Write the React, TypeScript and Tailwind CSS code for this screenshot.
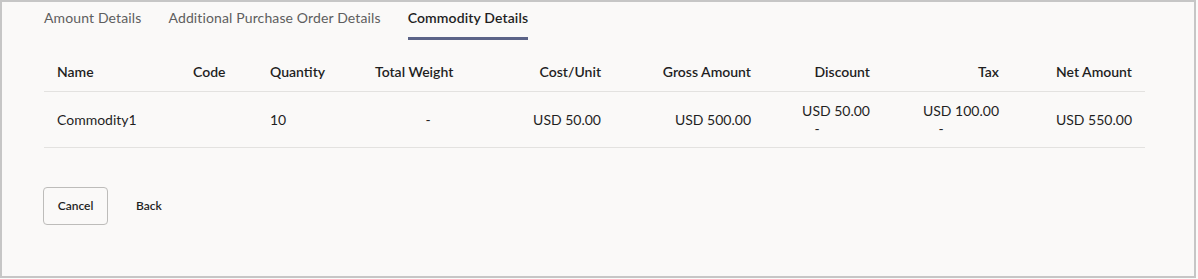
const columns = [
  { label: 'Name', align: 'left' },
  { label: 'Code', align: 'left' },
  { label: 'Quantity', align: 'left' },
  { label: 'Total Weight', align: 'left' },
  { label: 'Cost/Unit', align: 'right' },
  { label: 'Gross Amount', align: 'right' },
  { label: 'Discount', align: 'right' },
  { label: 'Tax', align: 'right' },
  { label: 'Net Amount', align: 'right' },
];

const tabs = ['Amount Details', 'Additional Purchase Order Details', 'Commodity Details'];

function Amount({ value }: { value: string }) {
  // amount with a second line for the rate
  return (
    <div className="flex flex-col items-end leading-[18px]">
      <span>{value}</span>
      <span className="w-full text-center">-</span>
    </div>
  );
}

export default function App() {
  return (
    <div className="w-[1198px] h-[279px] bg-[#fbfbfa]" style={{ fontFamily: 'Lato, "Noto Sans", sans-serif' }}>
      <div className="w-[1196px] h-[278px] border-2 border-[#c6c6c6] bg-[#faf9f8] px-[42px]">
        <div className="flex gap-[27px] pt-[6px] text-[14px] leading-[20px] tracking-[0.13px]">
          {tabs.map((t, i) => (
            <div
              key={t}
              className={
                i === 2
                  ? 'pb-[9px] border-b-[3px] border-[#5b6387] text-[#1f1f1f] font-semibold'
                  : 'pb-[9px] border-b-[3px] border-transparent text-[#5e5e5e]'
              }
            >
              {t}
            </div>
          ))}
        </div>

        <div className="mt-[13px] w-[1101px] text-[14px] text-[#1f1f1f]">
          <div className="grid grid-cols-[136px_77px_105px_132px_120px_150px_119px_129px_133px] h-[39px] pb-[2px] items-center border-b border-[#e3e2e0] font-semibold">
            {columns.map(c => (
              <div key={c.label} className={c.align === 'right' ? 'pr-[13px] text-right' : 'pl-[13px]'}>
                {c.label}
              </div>
            ))}
          </div>
          <div className="grid grid-cols-[136px_77px_105px_132px_120px_150px_119px_129px_133px] h-[56px] items-center border-b border-[#e3e2e0]">
            <div className="pl-[13px]">Commodity1</div>
            <div className="pl-[13px]"></div>
            <div className="pl-[13px]">10</div>
            <div className="text-center">-</div>
            <div className="pr-[13px] text-right">USD 50.00</div>
            <div className="pr-[13px] text-right">USD 500.00</div>
            <div className="pr-[13px]">
              <Amount value="USD 50.00" />
            </div>
            <div className="pr-[13px]">
              <Amount value="USD 100.00" />
            </div>
            <div className="pr-[13px] text-right">USD 550.00</div>
          </div>
        </div>

        <div className="flex items-center gap-[12px] mt-[39px] text-[12px] font-semibold text-[#1f1f1f]">
          <button className="h-[38px] w-[65px] -ml-[1px] rounded-[4px] border border-[#bdbcba] bg-[#faf9f8]">Cancel</button>
          <button className="h-[38px] px-[16px]">Back</button>
        </div>
      </div>
    </div>
  );
}
